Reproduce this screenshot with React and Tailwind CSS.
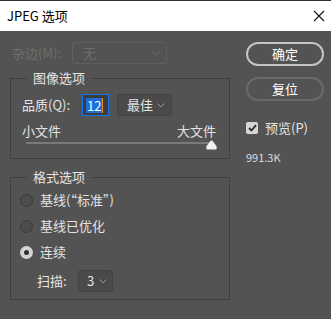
const Chevron = () => (
  <svg width="8" height="5" viewBox="0 0 8 5" fill="none" stroke="#9a9a9a" strokeWidth="1">
    <path d="M0.5 0.5 L4 4 L7.5 0.5" />
  </svg>
);

const Radio = ({ checked, label }) => (
  <div className="h-[26px] flex items-center gap-[7px]">
    {checked ? (
      <span className="w-[13px] h-[13px] rounded-full bg-[#d4d4d4] flex items-center justify-center">
        <span className="w-[5px] h-[5px] rounded-full bg-[#2e2e2e]"></span>
      </span>
    ) : (
      <span className="w-[13px] h-[13px] rounded-full border border-[#3a3a3a] bg-[#4c4c4c]"></span>
    )}
    <span>{label}</span>
  </div>
);

export default function App() {
  return (
    <div className="w-[331px] h-[319px] bg-[#535353] overflow-hidden text-[13px] leading-[16px] text-[#e4e4e4] font-['Segoe_UI','Noto_Sans_CJK_SC',sans-serif]">
      <div className="h-[31px] bg-white border-t border-[#2f2f2f] flex items-center justify-between pl-[7px] pr-[6px] text-black">
        <span>JPEG 选项</span>
        <svg width="12" height="12" viewBox="0 0 12 12" stroke="#111" strokeWidth="1.1">
          <path d="M1 1 L11 11 M11 1 L1 11" />
        </svg>
      </div>

      <div className="flex px-[10px] pt-[11px]">
        <div className="w-[220px] shrink-0">
          <div className="flex items-center h-[22px]">
            <span className="w-[62px] pl-[2px] text-[#6e6e6e]">杂边(M):</span>
            <div className="w-[95px] h-[22px] border border-[#5f5f5f] rounded-[3px] flex items-center justify-between pl-[10px] pr-[6px] text-[#6e6e6e]">
              <span>无</span>
              <svg width="8" height="5" viewBox="0 0 8 5" fill="none" stroke="#666" strokeWidth="1">
                <path d="M0.5 0.5 L4 4 L7.5 0.5" />
              </svg>
            </div>
          </div>

          <fieldset className="mt-[6px] border border-[#3f3f3f] pl-[11px] pr-[13px] pb-[6px]">
            <legend className="ml-[5px] px-[6px] leading-[16px]">图像选项</legend>
            <div className="flex items-center mt-[8px] h-[22px]">
              <span className="w-[60px]">品质(Q):</span>
              <div className="w-[27px] h-[22px] border border-[#1a73e8] bg-[#3c3c3c] flex items-center pl-[3px]">
                <span className="bg-[#1c6fd8] text-white leading-[15px] px-[1px]">12</span>
                <span className="w-[1px] h-[15px] bg-[#f08a24]"></span>
              </div>
              <div className="ml-[8px] w-[55px] h-[22px] border border-[#424242] bg-[#4a4a4a] rounded-[3px] flex items-center justify-between pl-[9px] pr-[6px]">
                <span>最佳</span>
                <Chevron />
              </div>
            </div>
            <div className="flex justify-between mt-[7px]">
              <span>小文件</span>
              <span>大文件</span>
            </div>
            <div className="relative h-[12px] mt-[1px]">
              <div className="absolute left-[4px] right-[2px] top-[2px] h-[2px] bg-[#7a7a7a]"></div>
              <svg className="absolute left-[184px] top-0" width="11" height="10" viewBox="0 0 11 10">
                <path d="M5.5 0.5 C6.3 0.5 6.8 1.2 7.4 2 L10 5.5 C10.6 6.4 10.6 6.8 10.6 7.6 L10.6 8.5 C10.6 9.2 10.2 9.6 9.5 9.6 L1.5 9.6 C0.8 9.6 0.4 9.2 0.4 8.5 L0.4 7.6 C0.4 6.8 0.4 6.4 1 5.5 L3.6 2 C4.2 1.2 4.7 0.5 5.5 0.5 Z" fill="#f2f2f2" />
              </svg>
            </div>
          </fieldset>

          <fieldset className="mt-[10px] border border-[#3f3f3f] pl-[9px] pb-[7px]">
            <legend className="ml-[7px] px-[6px] leading-[16px]">格式选项</legend>
            <div className="mt-[2px]">
              <Radio label="基线(“标准”)" />
              <Radio label="基线已优化" />
              <Radio checked label="连续" />
            </div>
            <div className="flex items-center mt-[5px] h-[22px] pl-[17px]">
              <span className="w-[41px]">扫描:</span>
              <div className="w-[35px] h-[22px] border border-[#424242] bg-[#4a4a4a] rounded-[3px] flex items-center justify-between pl-[8px] pr-[5px]">
                <span>3</span>
                <Chevron />
              </div>
            </div>
          </fieldset>
        </div>

        <div className="ml-[16px] w-[78px] shrink-0">
          <button className="w-[78px] h-[24px] rounded-full border-2 border-[#c4c4c4] flex items-center justify-center text-white">
            确定
          </button>
          <button className="mt-[11px] w-[78px] h-[24px] rounded-full border-2 border-[#6a6a6a] flex items-center justify-center text-white">
            复位
          </button>
          <div className="mt-[19px] flex items-center gap-[7px] h-[16px]">
            <span className="w-[12px] h-[12px] rounded-[2px] bg-[#d6d6d6] flex items-center justify-center">
              <svg width="9" height="8" viewBox="0 0 9 8" fill="none" stroke="#2b2b2b" strokeWidth="1.8">
                <path d="M1 4 L3.5 6.5 L8 1.2" />
              </svg>
            </span>
            <span>预览(P)</span>
          </div>
          <div className="mt-[14px] text-[11px] leading-[14px] text-[#dcdcdc]">991.3K</div>
        </div>
      </div>
    </div>
  );
}
